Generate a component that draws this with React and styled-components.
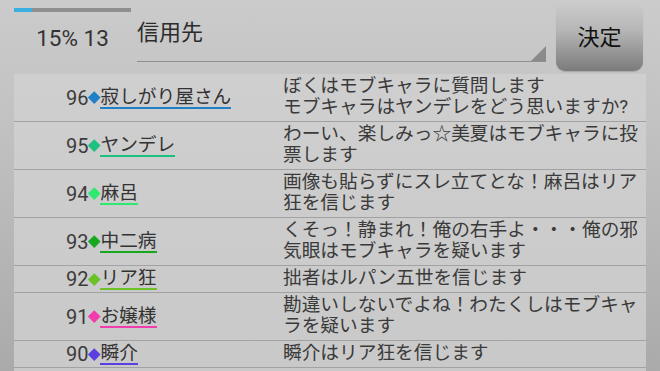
import React from "react";
import styled, { createGlobalStyle } from "styled-components";

const Global = createGlobalStyle`
  html, body { margin: 0; padding: 0; }
  body { font-family: Roboto, "Noto Sans CJK JP", sans-serif; }
`;

const Screen = styled.div`
  width: 660px;
  height: 371px;
  overflow: hidden;
  display: flex;
  flex-direction: column;
  background: linear-gradient(#cbcbcb, #c3c3c3 30%, #aaaaaa);
  color: #3a3a3a;
`;

const Header = styled.div`
  height: 74px;
  display: flex;
  align-items: flex-start;
  padding-left: 14px;
  box-sizing: border-box;
`;

const Progress = styled.div`
  width: 117px;
  display: flex;
  flex-direction: column;
  align-items: center;
  padding-top: 8px;
`;

const Track = styled.div`
  width: 100%;
  height: 4px;
  background: #8f8f8f;
  display: flex;
`;

const Fill = styled.div`
  height: 100%;
  background: #3aaee0;
`;

const Stats = styled.div`
  margin-top: 13px;
  font-size: 22.5px;
  line-height: 26px;
  color: #333;
`;

const Selector = styled.div`
  position: relative;
  margin-left: 6px;
  margin-top: 18px;
  width: 409px;
  height: 44px;
  box-sizing: border-box;
  border-bottom: 1px solid #8f8f8f;
  font-size: 22px;
  line-height: 30px;
  color: #2c2c2c;
  &::after {
    content: "";
    position: absolute;
    right: 0;
    bottom: 0;
    width: 15px;
    height: 15px;
    background: #8a8a8a;
    clip-path: polygon(100% 0, 100% 100%, 0 100%);
  }
`;

const DecideButton = styled.button`
  margin-left: 10px;
  margin-top: 3px;
  width: 87px;
  height: 68px;
  border: none;
  border-radius: 9px;
  background: linear-gradient(#cbcbcb, #b6b6b6 40%, #7b7b7b);
  box-shadow: 0 1px 1px rgba(0, 0, 0, 0.15);
  font-family: "Noto Sans CJK JP", sans-serif;
  font-size: 22px;
  line-height: 1;
  color: #111;
  padding: 0 0 4px;
  display: flex;
  align-items: center;
  justify-content: center;
`;

const Panel = styled.div`
  flex: 1;
  margin: 0 14px;
  background: linear-gradient(#cfcfcf, #c9c9c9);
`;

const Row = styled.div`
  display: grid;
  grid-template-columns: 269px 1fr;
  border-bottom: 1px solid #a2a2a2;
  font-size: 18.7px;
`;

const NameCell = styled.div`
  display: flex;
  align-items: center;
  padding-left: 52px;
`;

const Rank = styled.span`
  font-size: 20px;
  line-height: 20px;
  color: #3c3c3c;
`;

const Diamond = styled.span`
  width: 12px;
  height: 12px;
  display: inline-flex;
  align-items: center;
  justify-content: center;
  &::before {
    content: "";
    width: 8.5px;
    height: 8.5px;
    background: ${(p) => p.$color};
    transform: rotate(45deg);
  }
`;

const Name = styled.span`
  display: inline-block;
  line-height: 20px;
  border-bottom: 2px solid ${(p) => p.$color};
  color: #333;
`;

const Message = styled.div`
  padding: 2px 0 3px;
  line-height: 21px;
  white-space: pre-line;
  color: #3a3a3a;
`;

const rows = [
  { n: 96, name: "寂しがり屋さん", color: "#1f80c8", msg: "ぼくはモブキャラに質問します\nモブキャラはヤンデレをどう思いますか?" },
  { n: 95, name: "ヤンデレ", color: "#1ec080", msg: "わーい、楽しみっ☆美夏はモブキャラに投票します" },
  { n: 94, name: "麻呂", color: "#2ee870", msg: "画像も貼らずにスレ立てとな！麻呂はリア狂を信じます" },
  { n: 93, name: "中二病", color: "#18a820", msg: "くそっ！静まれ！俺の右手よ・・・俺の邪気眼はモブキャラを疑います" },
  { n: 92, name: "リア狂", color: "#6cc028", msg: "拙者はルパン五世を信じます" },
  { n: 91, name: "お嬢様", color: "#f03cac", msg: "勘違いしないでよね！わたくしはモブキャラを疑います" },
  { n: 90, name: "瞬介", color: "#5a40e0", msg: "瞬介はリア狂を信じます" },
];

export default function App() {
  return (
    <Screen>
      <Global />
      <Header>
        <Progress>
          <Track>
            <Fill style={{ width: "15%" }} />
          </Track>
          <Stats>15% 13</Stats>
        </Progress>
        <Selector>信用先</Selector>
        <DecideButton>決定</DecideButton>
      </Header>
      <Panel>
        {rows.map((r) => (
          <Row key={r.n}>
            <NameCell>
              <Rank>{r.n}</Rank>
              <Diamond $color={r.color} />
              <Name $color={r.color}>{r.name}</Name>
            </NameCell>
            <Message>{r.msg}</Message>
          </Row>
        ))}
      </Panel>
    </Screen>
  );
}
